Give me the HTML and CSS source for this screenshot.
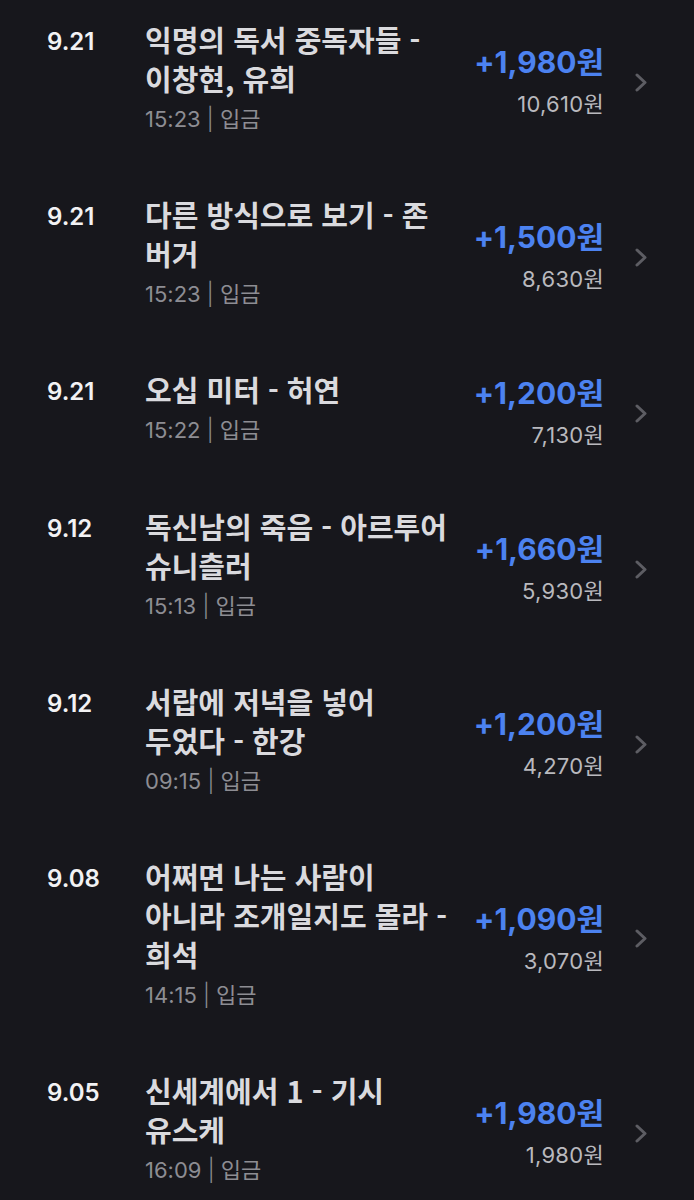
FILE: index.html
```html
<!DOCTYPE html>
<html lang="ko">
<head>
    <meta charset="UTF-8">
    <meta name="viewport" content="width=device-width, initial-scale=1.0">
    <title>거래 내역</title>
    <link rel="stylesheet" href="styles.css">
</head>
<body>
<main class="history">

    <div class="entry">
        <div class="entry-date">9.21</div>
        <div class="entry-info">
            <div class="entry-title">익명의 독서 중독자들 - 이창현, 유희</div>
            <div class="entry-meta">15:23 <span class="sep">|</span> 입금</div>
        </div>
        <div class="entry-amount">
            <div class="amount-plus">+1,980원</div>
            <div class="amount-balance">10,610원</div>
        </div>
        <svg class="chevron" viewBox="0 0 13 19"><polyline points="2,2 10,9.5 2,17" /></svg>
    </div>

    <div class="entry">
        <div class="entry-date">9.21</div>
        <div class="entry-info">
            <div class="entry-title">다른 방식으로 보기 - 존 버거</div>
            <div class="entry-meta">15:23 <span class="sep">|</span> 입금</div>
        </div>
        <div class="entry-amount">
            <div class="amount-plus">+1,500원</div>
            <div class="amount-balance">8,630원</div>
        </div>
        <svg class="chevron" viewBox="0 0 13 19"><polyline points="2,2 10,9.5 2,17" /></svg>
    </div>

    <div class="entry">
        <div class="entry-date">9.21</div>
        <div class="entry-info">
            <div class="entry-title">오십 미터 - 허연</div>
            <div class="entry-meta">15:22 <span class="sep">|</span> 입금</div>
        </div>
        <div class="entry-amount">
            <div class="amount-plus">+1,200원</div>
            <div class="amount-balance">7,130원</div>
        </div>
        <svg class="chevron" viewBox="0 0 13 19"><polyline points="2,2 10,9.5 2,17" /></svg>
    </div>

    <div class="entry">
        <div class="entry-date">9.12</div>
        <div class="entry-info">
            <div class="entry-title">독신남의 죽음 - 아르투어 슈니츨러</div>
            <div class="entry-meta">15:13 <span class="sep">|</span> 입금</div>
        </div>
        <div class="entry-amount">
            <div class="amount-plus">+1,660원</div>
            <div class="amount-balance">5,930원</div>
        </div>
        <svg class="chevron" viewBox="0 0 13 19"><polyline points="2,2 10,9.5 2,17" /></svg>
    </div>

    <div class="entry">
        <div class="entry-date">9.12</div>
        <div class="entry-info">
            <div class="entry-title">서랍에 저녁을 넣어 두었다 - 한강</div>
            <div class="entry-meta">09:15 <span class="sep">|</span> 입금</div>
        </div>
        <div class="entry-amount">
            <div class="amount-plus">+1,200원</div>
            <div class="amount-balance">4,270원</div>
        </div>
        <svg class="chevron" viewBox="0 0 13 19"><polyline points="2,2 10,9.5 2,17" /></svg>
    </div>

    <div class="entry">
        <div class="entry-date">9.08</div>
        <div class="entry-info">
            <div class="entry-title">어쩌면 나는 사람이 아니라 조개일지도 몰라 - 희석</div>
            <div class="entry-meta">14:15 <span class="sep">|</span> 입금</div>
        </div>
        <div class="entry-amount">
            <div class="amount-plus">+1,090원</div>
            <div class="amount-balance">3,070원</div>
        </div>
        <svg class="chevron" viewBox="0 0 13 19"><polyline points="2,2 10,9.5 2,17" /></svg>
    </div>

    <div class="entry">
        <div class="entry-date">9.05</div>
        <div class="entry-info">
            <div class="entry-title">신세계에서 1 - 기시 유스케</div>
            <div class="entry-meta">16:09 <span class="sep">|</span> 입금</div>
        </div>
        <div class="entry-amount">
            <div class="amount-plus">+1,980원</div>
            <div class="amount-balance">1,980원</div>
        </div>
        <svg class="chevron" viewBox="0 0 13 19"><polyline points="2,2 10,9.5 2,17" /></svg>
    </div>

</main>
</body>
</html>
```

FILE: styles.css
```css
body {
    margin: 0;
    background-color: #17171c;
    font-family: Inter, "Noto Sans CJK KR", sans-serif;
}

.history {
    display: flex;
    flex-direction: column;
    gap: 63px;
    padding: 20px 46px 0 45px;
}

.entry {
    display: flex;
    align-items: flex-start;
}

.entry-date {
    flex: none;
    width: 98px;
    margin-left: 2px;
    padding-top: 2px;
    font-size: 24px;
    font-weight: 600;
    line-height: 39px;
    color: #f2f2f4;
}

.entry-info {
    flex: none;
    width: 308px;
}

.entry-title {
    font-family: "Noto Sans CJK KR", sans-serif;
    font-size: 29px;
    font-weight: 600;
    line-height: 39px;
    word-break: keep-all;
    color: #dadade;
}

.entry-meta {
    margin-top: 8px;
    font-size: 22px;
    line-height: 26px;
    color: #8d8d93;
}

.entry-meta .sep {
    font-weight: 300;
}

/* amounts sit a little below the middle of the row,
   the negative bottom margin keeps the row height */
.entry-amount {
    flex: 1;
    align-self: center;
    margin: 5px 0 -5px;
    text-align: right;
}

.amount-plus {
    font-size: 30px;
    font-weight: 700;
    line-height: 36px;
    color: #4c82f0;
}

.amount-balance {
    margin-top: 10px;
    font-size: 22px;
    line-height: 28px;
    letter-spacing: 0.3px;
    color: #b9b9be;
}

.chevron {
    flex: none;
    width: 13px;
    height: 19px;
    margin: 6px 0 -6px 31px;
    align-self: center;
}

.chevron polyline {
    fill: none;
    stroke: #5d5d63;
    stroke-width: 3;
    stroke-linecap: round;
    stroke-linejoin: round;
}
```
